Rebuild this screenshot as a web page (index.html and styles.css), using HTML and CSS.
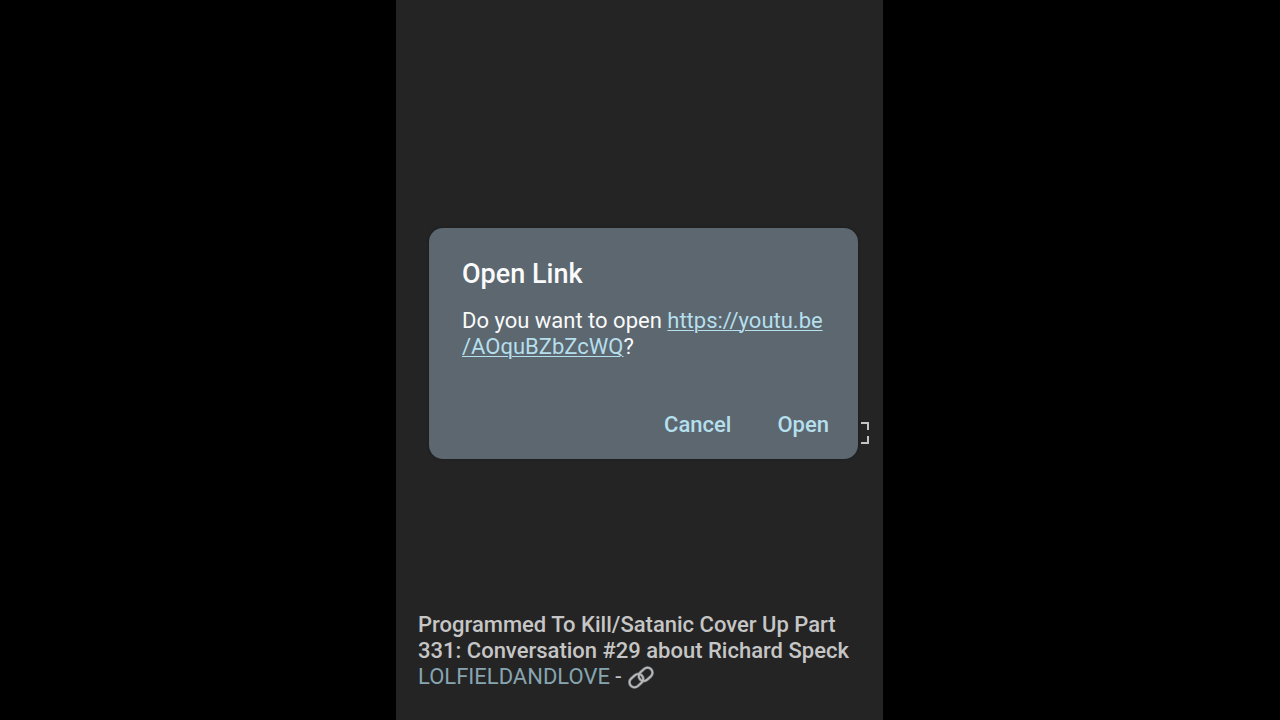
FILE: index.html
```html
<!DOCTYPE html>
<html lang="en">
<head>
    <meta charset="UTF-8">
    <meta name="viewport" content="width=device-width, initial-scale=1.0">
    <title>Open Link</title>
    <link rel="stylesheet" href="styles.css">
</head>
<body>
    <main class="screen">
        <section class="player">
            <button type="button" class="fullscreen" aria-label="Fullscreen">
                <svg width="22" height="22" viewBox="0 0 22 22" fill="none" stroke="currentColor" stroke-width="2">
                    <path d="M1 8V1H8M14 1H21V8M21 14V21H14M8 21H1V14"/>
                </svg>
            </button>
        </section>

        <section class="caption">
            <h2>Programmed To Kill/Satanic Cover Up Part 331: Conversation #29 about Richard Speck</h2>
            <p>
                <a href="#channel" class="channel">LOLFIELDANDLOVE</a> -
                <a href="#link" class="chain" aria-label="Link">
                    <svg width="28" height="26" viewBox="0 0 28 26" fill="none">
                        <g stroke="#77797b" stroke-width="3">
                            <rect x="-7" y="-5" width="15" height="10" rx="5" transform="translate(9 16) rotate(-43)"/>
                            <rect x="-8" y="-5" width="15" height="10" rx="5" transform="translate(19 9) rotate(-43)"/>
                        </g>
                        <g stroke="#b9bbbc" stroke-width="1.6">
                            <rect x="-7" y="-5" width="15" height="10" rx="5" transform="translate(9 16) rotate(-43)"/>
                            <rect x="-8" y="-5" width="15" height="10" rx="5" transform="translate(19 9) rotate(-43)"/>
                        </g>
                    </svg>
                </a>
            </p>
        </section>

        <div class="overlay">
            <div class="dialog" role="dialog" aria-labelledby="dialogTitle">
                <h1 id="dialogTitle">Open Link</h1>
                <p>Do you want to open <a href="https://youtu.be/AOquBZbZcWQ">https://youtu.be<wbr>/AOquBZbZcWQ</a>?</p>
                <div class="actions">
                    <button type="button">Cancel</button>
                    <button type="button">Open</button>
                </div>
            </div>
        </div>
    </main>
</body>
</html>
```
FILE: styles.css
```css
* {
    box-sizing: border-box;
}
body {
    margin: 0;
    padding-right: 1px;
    background-color: #000;
    font-family: Roboto, sans-serif;
    font-size: 22px;
    line-height: 26px;
}
h1, h2, p {
    margin: 0;
}
button {
    padding: 0;
    border: none;
    background: none;
    font: inherit;
    cursor: pointer;
}
.screen {
    position: relative;
    display: flex;
    flex-direction: column;
    justify-content: space-between;
    max-width: 487px;
    min-height: 100vh;
    margin: 0 auto;
    background-color: #242424;
}
.player {
    display: flex;
    justify-content: flex-end;
    align-items: flex-end;
    height: 444px;
    padding-right: 14px;
}
.fullscreen {
    display: flex;
    color: #c4c4c4;
}
.caption {
    padding: 0 22px 29px;
    color: #c6c6c6;
}
.caption h2 {
    font-size: 22px;
    font-weight: 500;
}
.channel {
    color: #87a5b1;
    text-decoration: none;
}
.chain svg {
    vertical-align: middle;
}
.overlay {
    position: absolute;
    inset: 0;
    display: flex;
    align-items: center;
    padding: 0 25px 33px 33px;
}
.dialog {
    width: 100%;
    padding: 31px 29px 21px 33px;
    border-radius: 14px;
    background-color: #5c6770;
    box-shadow: 0 0 3px #1a1a1a;
    color: #fafafa;
}
.dialog h1 {
    margin-bottom: 19px;
    font-size: 27px;
    font-weight: 500;
    line-height: 30px;
}
.dialog a {
    color: #b5dfec;
    text-decoration-thickness: 1px;
    text-underline-offset: 2px;
}
.actions {
    display: flex;
    justify-content: flex-end;
    gap: 46px;
    margin-top: 52px;
}
.actions button {
    color: #b5dfec;
    font-weight: 500;
}
```
